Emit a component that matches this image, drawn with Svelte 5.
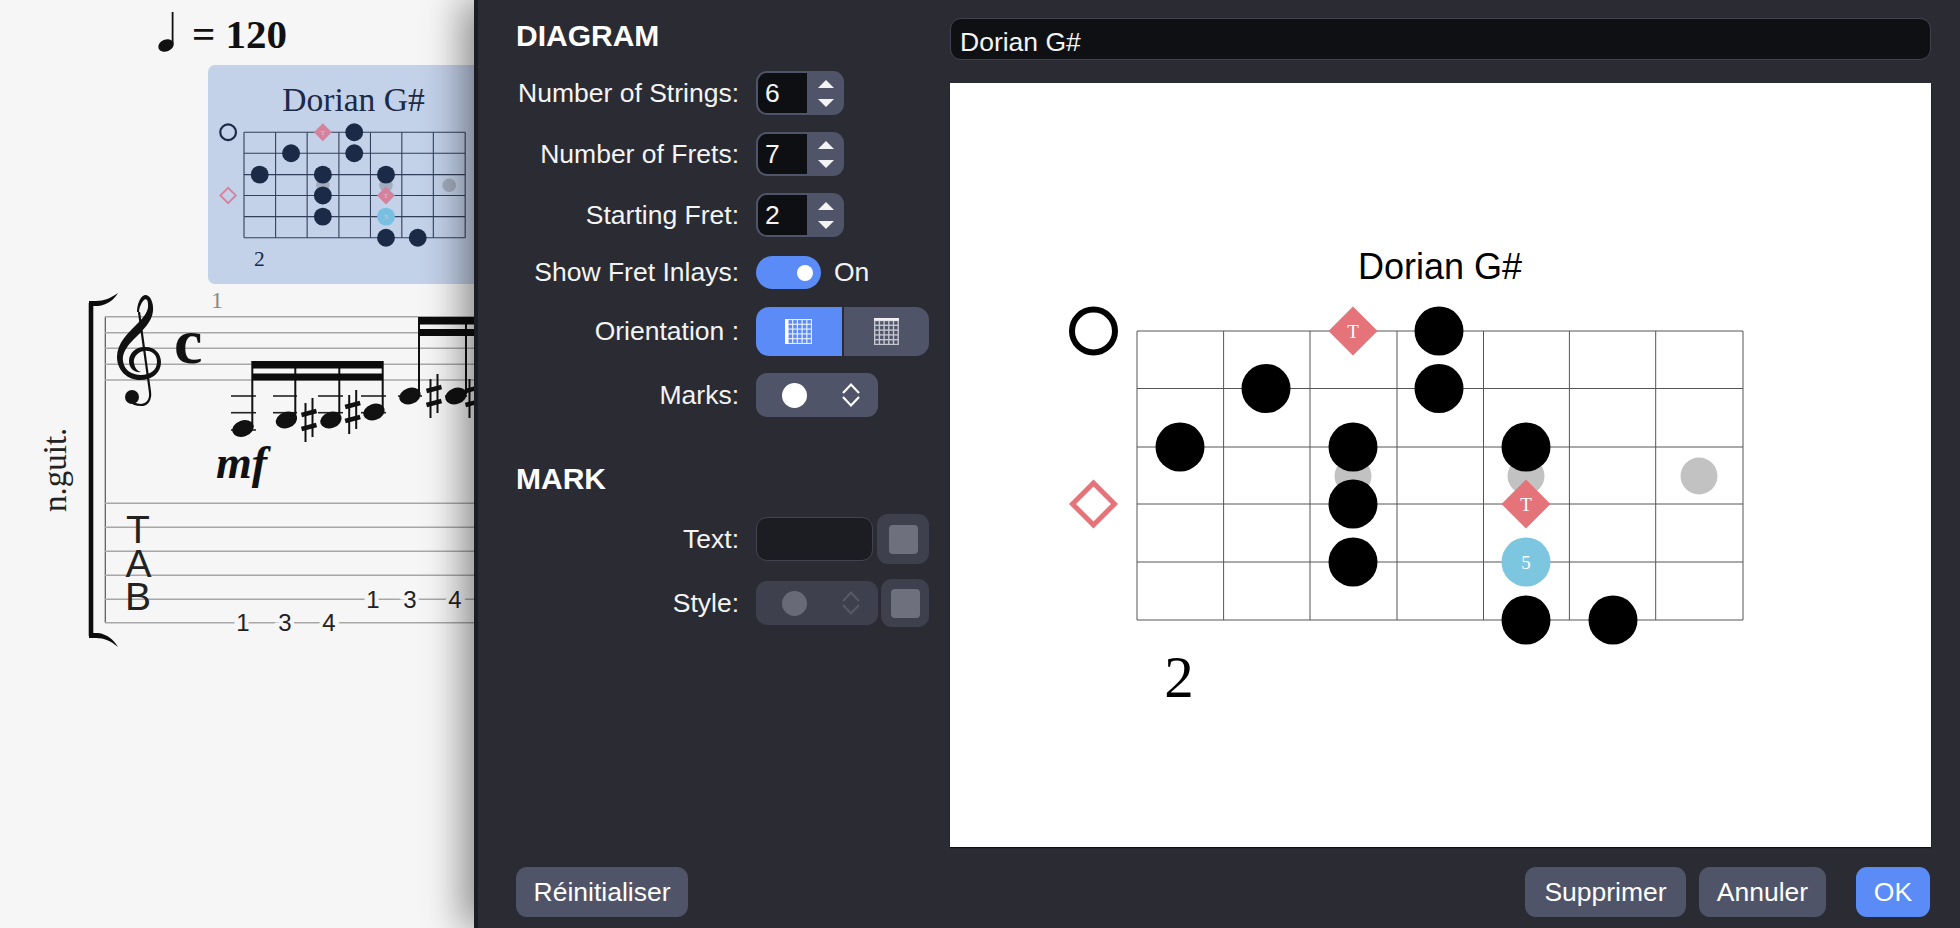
<script>
    const colX = [0, 86.6, 173, 260, 346.5, 432.4, 518.7, 606]
    const rowY = [0, 57.5, 116, 173, 231, 289]

    // fret marks, in grid coordinates of the big preview
    const inlays = [[216, 145], [389, 145], [562, 145]]
    const dots = [
        [302, 0], [302, 57.5], [129, 57.5], [43, 116], [216, 116], [389, 116],
        [216, 173], [216, 231], [389, 289], [476, 289]
    ]
    const big = { ink: '#000', line: '#555', lineW: 1, inlay: '#c2c2c2', red: '#e4737a', blue: '#7cc6e0', txt: '#fff', label: '#000', ring: '#000', titleX: 303, titleY: -52 }
    const small = { ink: '#1b2a47', line: '#333f5a', lineW: 1.1, inlay: '#a3adbd', red: '#d4829d', blue: '#78bfe2', txt: '#e8c8d4', label: '#1b2a47', ring: '#1b2a47', titleX: 300, titleY: -59 }

    const staff = [316.7, 332.7, 348.3, 364.3, 380]
    const tabLines = [503.3, 527.3, 551.3, 575.3, 599.3, 622.7]
    const heads = [[243, 428.5], [286.5, 420], [331, 420], [374, 412], [410, 396], [456, 396]]
    const stems = [[252.3, 361, 427], [295.3, 361, 418], [339.3, 361, 418], [382.7, 361, 410], [419, 317, 394], [466, 317, 394]]
    const ledgers = [
        [231, 256, 396], [231, 256, 412.7], [231, 256, 430],
        [273, 297, 396], [273, 297, 412.7],
        [318, 343, 396], [318, 343, 412.7],
        [361, 386, 396], [361, 386, 412.7],
        [398, 422, 396], [445, 467, 396]
    ]
    const sharps = [[309, 420], [352.7, 412], [434, 396], [473, 396]]
    const tabNums = [['1', 243, 622.7], ['3', 285, 622.7], ['4', 329, 622.7], ['1', 373, 599.3], ['3', 410, 599.3], ['4', 455, 599.3]]
    const spinners = [['Number of Strings:', '6'], ['Number of Frets:', '7'], ['Starting Fret:', '2']]
    const six = [0, 1, 2, 3, 4, 5]
</script>

{#snippet diamond(x, y, fill, t, c)}
    <polygon points="{x - 24.5},{y} {x},{y - 24.5} {x + 24.5},{y} {x},{y + 24.5}" fill={fill} />
    <text x={x} y={y + 6.5} class="mark-text" fill={c}>{t}</text>
{/snippet}

{#snippet fretboard(th)}
    <text x={th.titleX} y={th.titleY} class="fb-title" fill={th.label}>Dorian G#</text>
    {#each rowY as y}
        <line x1="0" x2="606" y1={y} y2={y} stroke={th.line} stroke-width={th.lineW} vector-effect="non-scaling-stroke" />
    {/each}
    {#each colX as x}
        <line x1={x} x2={x} y1="0" y2="289" stroke={th.line} stroke-width={th.lineW} vector-effect="non-scaling-stroke" />
    {/each}
    {#each inlays as [x, y]}
        <circle cx={x} cy={y} r="18.5" fill={th.inlay} />
    {/each}
    {#each dots as [x, y]}
        <circle cx={x} cy={y} r="24.5" fill={th.ink} />
    {/each}
    <circle cx="-43.5" cy="0" r="21.5" fill="none" stroke={th.ring} stroke-width="6" />
    <polygon points="-64.5,173 -43.5,152 -22.5,173 -43.5,194" fill="none" stroke={th.red} stroke-width="5" />
    {@render diamond(216, 0, th.red, 'T', th.txt)}
    {@render diamond(389, 173, th.red, 'T', th.txt)}
    <circle cx="389" cy="231" r="24.5" fill={th.blue} />
    <text x="389" y="237.5" class="mark-text" fill={th.txt}>5</text>
    <text x="42" y="366" class="fb-fret" fill={th.label}>2</text>
{/snippet}

{#snippet sharp(x, y)}
    <g stroke="#111" fill="none">
        <line x1={x - 3.5} x2={x - 3.5} y1={y - 17} y2={y + 22} stroke-width="2" />
        <line x1={x + 3.5} x2={x + 3.5} y1={y - 22} y2={y + 17} stroke-width="2" />
        <line x1={x - 7.5} x2={x + 7.5} y1={y - 5} y2={y - 9} stroke-width="4.5" />
        <line x1={x - 7.5} x2={x + 7.5} y1={y + 9} y2={y + 5} stroke-width="4.5" />
    </g>
{/snippet}

{#snippet updown(color)}
    <svg class="chev" width="20" height="28" viewBox="0 0 20 28">
        <path d="M2 12 L10 3.5 L18 12 M2 16 L10 24.5 L18 16" fill="none" stroke={color} stroke-width="2.2" />
    </svg>
{/snippet}

<div class="page">
    <div class="score">
        <svg width="474" height="928" viewBox="0 0 474 928">
            <!-- tempo -->
            <ellipse cx="166" cy="45.5" rx="8" ry="6" fill="#111" transform="rotate(-22 166 45.5)" />
            <line x1="172.6" x2="172.6" y1="12" y2="44" stroke="#111" stroke-width="1.8" />
            <text x="192" y="47.5" class="tempo">= 120</text>

            <!-- selected diagram -->
            <rect x="208" y="65" width="280" height="219" rx="7" fill="#c3d1e9" />
            <g transform="translate(244 132.3) scale(0.365)">
                {@render fretboard(small)}
            </g>

            <!-- system -->
            <text transform="translate(66 512) rotate(-90)" class="instr">n.guit.</text>
            <text x="217" y="308" class="measure">1</text>
            <path d="M91 303 L91 636" stroke="#0c0c0c" stroke-width="4.6" />
            <path d="M89 301 L89 306 L98 306 C107 305 114 300 118 293 C111 298 104 301 96 301 Z" fill="#0c0c0c" />
            <path d="M89 638 L89 633 L98 633 C107 634 114 640 118 647 C111 641 104 638 96 638 Z" fill="#0c0c0c" />
            <line x1="105.3" x2="105.3" y1="316.7" y2="622.7" stroke="#555" stroke-width="1.2" />
            {#each staff as y}
                <line x1="105" x2="474" y1={y} y2={y} stroke="#a8a8a8" stroke-width="1.5" />
            {/each}
            {#each tabLines as y}
                <line x1="105" x2="474" y1={y} y2={y} stroke="#a8a8a8" stroke-width="1.5" />
            {/each}

            <!-- clef and time -->
            <path d="M145 295 C150 294 154 303 153 311 C152 322 143 330 134 339 C126 347 122 354 123 361 C124 370 132 375 141 375 C150 375 157 370 157 362 C157 354 151 350 144 351 C137 352 133 358 134 363 C135 368 137 371 141 372 C134 373 129 368 129 361 C129 353 136 347 144 347 C154 346 161 353 161 362 C161 373 152 380 140 380 C127 380 117 370 117 357 C117 343 128 333 137 324 C144 317 149 311 148 304 C148 300 146 298 144 300 C141 303 139 308 139 312 L137 312 C137 305 140 296 145 295 Z" fill="#111" />
            <path d="M139 312 L150 392 C151 400 147 405 141 405 C136 405 131 403 130 400" fill="none" stroke="#111" stroke-width="2.2" />
            <circle cx="132" cy="397" r="7" fill="#111" />
            <text x="174" y="363" class="time">c</text>

            <!-- notes -->
            {#each ledgers as [a, b, y]}
                <line x1={a} x2={b} y1={y} y2={y} stroke="#222" stroke-width="1.6" />
            {/each}
            {#each stems as [x, a, b]}
                <line x1={x} x2={x} y1={a} y2={b} stroke="#111" stroke-width="2" />
            {/each}
            <rect x="252" y="361" width="131" height="7.5" fill="#0c0c0c" />
            <rect x="252" y="373.5" width="131" height="7" fill="#0c0c0c" />
            <rect x="419" y="317" width="55" height="7.5" fill="#0c0c0c" />
            <rect x="419" y="329" width="55" height="7" fill="#0c0c0c" />
            {#each heads as [x, y]}
                <ellipse cx={x} cy={y} rx="11" ry="8" fill="#111" transform="rotate(-20 {x} {y})" />
            {/each}
            {#each sharps as [x, y]}
                {@render sharp(x, y)}
            {/each}
            <text x="216" y="478" class="dyn">mf</text>

            <!-- tablature -->
            <text x="126" y="543.3" class="tab">T</text>
            <text x="125.5" y="576.7" class="tab">A</text>
            <text x="125" y="610" class="tab">B</text>
            {#each tabNums as [n, x, y]}
                <text x={x} y={y + 8.5} class="tabnum">{n}</text>
            {/each}
        </svg>
    </div>

    <div class="dialog">
        <div class="body">
            <div class="controls">
                <h2>DIAGRAM</h2>
                <div class="rows">
                    {#each spinners as [name, val]}
                        <div class="row">
                            <span class="label">{name}</span>
                            <div class="spinner">
                                <span class="spin-val">{val}</span>
                                <span class="spin-btns">
                                    <i class="arrow up"></i>
                                    <i class="arrow down"></i>
                                </span>
                            </div>
                        </div>
                    {/each}
                    <div class="row toggle-row">
                        <span class="label">Show Fret Inlays:</span>
                        <span class="toggle"><i></i></span>
                        <span class="on">On</span>
                    </div>
                    <div class="row orient-row">
                        <span class="label">Orientation :</span>
                        <div class="segmented">
                            <span class="seg active">
                                <svg width="27" height="25" viewBox="0 0 27 25">
                                    {#each six as i}
                                        <line x1="1" x2="27" y1={0.5 + i * 4.8} y2={0.5 + i * 4.8} stroke="#e6edff" stroke-width="1.2" />
                                        <line x1={3 + i * 4.7} x2={3 + i * 4.7} y1="0" y2="25" stroke="#e6edff" stroke-width="1.2" />
                                    {/each}
                                    <rect x="0" y="0" width="3" height="25" fill="#fff" />
                                </svg>
                            </span>
                            <span class="seg">
                                <svg width="25" height="27" viewBox="0 0 25 27">
                                    {#each six as i}
                                        <line x1="0" x2="25" y1={2.5 + i * 4.8} y2={2.5 + i * 4.8} stroke="#c4c6d0" stroke-width="1.4" />
                                    {/each}
                                    {#each six as i}
                                        <line x1={0.7 + i * 4.7} x2={0.7 + i * 4.7} y1="1" y2="27" stroke="#c4c6d0" stroke-width="1.4" />
                                    {/each}
                                    <rect x="0" y="0" width="25" height="2.6" fill="#f0f0f4" />
                                </svg>
                            </span>
                        </div>
                    </div>
                    <div class="row">
                        <span class="label">Marks:</span>
                        <div class="select">
                            <i class="dot"></i>
                            {@render updown('#fff')}
                        </div>
                    </div>
                </div>

                <h2 class="mark-head">MARK</h2>
                <div class="rows tight">
                    <div class="row double">
                        <span class="label">Text:</span>
                        <span class="text-field"></span>
                        <span class="square"><i></i></span>
                    </div>
                    <div class="row double">
                        <span class="label">Style:</span>
                        <div class="select off">
                            <i class="dot"></i>
                            {@render updown('#565866')}
                        </div>
                        <span class="square"><i></i></span>
                    </div>
                </div>
            </div>

            <div class="preview">
                <div class="name">Dorian G#</div>
                <div class="canvas">
                    <svg width="981" height="764" viewBox="0 0 981 764">
                        <g transform="translate(187 248)">
                            {@render fretboard(big)}
                        </g>
                    </svg>
                </div>
            </div>
        </div>

        <div class="footer">
            <button class="btn reset">Réinitialiser</button>
            <div class="spacer"></div>
            <button class="btn del">Supprimer</button>
            <button class="btn cancel">Annuler</button>
            <button class="btn ok">OK</button>
        </div>
    </div>
</div>

<style>
    :global(body) {
        margin: 0;
        background: #f6f6f6;
        font-family: "Liberation Sans", Arial, sans-serif;
    }

    .page {
        width: 1960px;
        height: 928px;
        display: flex;
        overflow: hidden;
        background: #f6f6f6;
    }

    .score {
        flex: 0 0 474px;
    }

    .score svg {
        display: block;
    }

    .tempo {
        font: bold 41px "Liberation Serif", serif;
        fill: #111;
    }

    .instr {
        font: 33px "Liberation Serif", serif;
        fill: #222;
    }

    .measure {
        font: 24px "Liberation Serif", serif;
        fill: #8a8a8a;
        text-anchor: middle;
    }

    .time {
        font: bold 64px "Liberation Serif", serif;
        fill: #111;
    }

    .dyn {
        font: italic bold 46px "Liberation Serif", serif;
        fill: #111;
    }

    .tab {
        font: 39px "Liberation Sans", sans-serif;
        fill: #222;
    }

    .tabnum {
        font: 24px "Liberation Sans", sans-serif;
        fill: #222;
        text-anchor: middle;
        stroke: #f6f6f6;
        stroke-width: 8px;
        paint-order: stroke;
    }

    .fb-title {
        font: 36px "Liberation Sans", sans-serif;
        text-anchor: middle;
    }

    .score .fb-title {
        font: 92px "Liberation Serif", serif;
    }

    .fb-fret {
        font: 59px "Liberation Serif", serif;
        text-anchor: middle;
    }

    .mark-text {
        font: 19px "Liberation Serif", serif;
        text-anchor: middle;
    }

    .dialog {
        flex: 1;
        position: relative;
        z-index: 1;
        display: flex;
        flex-direction: column;
        background: #2a2b33;
        border-left: 4px solid #1c1d22;
        box-shadow: -12px 0 36px rgba(0, 0, 0, 0.42);
        color: #f4f4f4;
    }

    .body {
        flex: 1;
        display: flex;
    }

    .controls {
        flex: 0 0 434px;
        padding-left: 38px;
    }

    h2 {
        margin: 19px 0 18px;
        font-size: 30px;
        line-height: 34px;
        font-weight: bold;
        color: #fff;
    }

    .mark-head {
        margin: 45px 0 19px;
    }

    .rows {
        display: flex;
        flex-direction: column;
        gap: 17px;
    }

    .rows.tight {
        gap: 16px;
    }

    .row {
        display: flex;
        align-items: center;
        gap: 18px;
        height: 44px;
    }

    .label {
        flex: 0 0 223px;
        text-align: right;
        font-size: 26.5px;
        line-height: 45px;
        white-space: nowrap;
    }

    .spinner {
        width: 88px;
        height: 44px;
        margin-left: -1px;
        box-sizing: border-box;
        display: flex;
        padding: 2px 0 2px 2px;
        border-radius: 11px;
        background: #4f5468;
    }

    .spin-val {
        width: 49px;
        padding-left: 7px;
        box-sizing: border-box;
        border-radius: 9px 0 0 9px;
        background: #0e0f12;
        font-size: 26.5px;
        line-height: 41px;
    }

    .spin-btns {
        flex: 1;
        display: flex;
        flex-direction: column;
        align-items: center;
        justify-content: center;
        gap: 11px;
    }

    .arrow {
        width: 0;
        height: 0;
        border-left: 8px solid transparent;
        border-right: 8px solid transparent;
    }

    .arrow.up {
        border-bottom: 8px solid #f4f4f4;
    }

    .arrow.down {
        border-top: 8px solid #f4f4f4;
    }

    .toggle-row {
        height: 33px;
        margin-top: 2px;
    }

    .toggle {
        width: 65px;
        height: 33px;
        margin-left: -1px;
        border-radius: 17px;
        background: #5a8bf7;
        display: flex;
        align-items: center;
        justify-content: flex-end;
        padding-right: 8px;
        box-sizing: border-box;
    }

    .toggle i {
        width: 16px;
        height: 16px;
        border-radius: 50%;
        background: #fff;
    }

    .on {
        margin-left: -5px;
        font-size: 26.5px;
    }

    .orient-row {
        height: 49px;
        margin-top: 1px;
    }

    .segmented {
        display: flex;
        gap: 2px;
        width: 173px;
        height: 49px;
        margin-left: -1px;
    }

    .seg {
        flex: 1;
        display: flex;
        align-items: center;
        justify-content: center;
        background: #4f5468;
        border-radius: 0 13px 13px 0;
    }

    .seg.active {
        background: #5a8bf7;
        border-radius: 13px 0 0 13px;
    }

    .select {
        width: 122px;
        height: 44px;
        margin-left: -1px;
        border-radius: 11px;
        background: #4f5468;
        display: flex;
        align-items: center;
        padding-left: 26px;
        gap: 34px;
        box-sizing: border-box;
    }

    .dot {
        width: 25px;
        height: 25px;
        border-radius: 50%;
        background: #fff;
    }

    .chev {
        display: block;
        flex: none;
    }

    .select.off {
        background: #3e404e;
    }

    .select.off .dot {
        background: #686a78;
    }

    .double {
        height: 48px;
    }

    .text-field {
        width: 117px;
        height: 44px;
        margin-left: -1px;
        box-sizing: border-box;
        border: 1.5px solid #42444f;
        border-radius: 11px;
        background: #1c1d22;
    }

    .square {
        flex: none;
        width: 52px;
        height: 50px;
        margin-left: -14px;
        border-radius: 11px;
        background: #3e404e;
        display: flex;
        align-items: center;
        justify-content: center;
    }

    .double:last-child .square {
        width: 48px;
        height: 48px;
        margin-left: -15px;
    }

    .square i {
        width: 29px;
        height: 29px;
        border-radius: 4px;
        background: #6e707d;
    }

    .preview {
        display: flex;
        flex-direction: column;
        gap: 23px;
        margin-top: 18px;
        width: 981px;
    }

    .name {
        height: 42px;
        box-sizing: border-box;
        padding-left: 9px;
        border: 1.5px solid #40424e;
        border-radius: 11px;
        background: #0f1014;
        font-size: 26.5px;
        line-height: 46px;
    }

    .canvas {
        height: 764px;
        background: #fff;
        box-shadow: 0 1px 1px #111;
    }

    .canvas svg {
        display: block;
    }

    .footer {
        flex: 0 0 81px;
        display: flex;
        box-sizing: border-box;
        padding: 20px 30px 11px 38px;
    }

    .spacer {
        flex: 1;
    }

    .btn {
        height: 50px;
        padding: 0;
        border: none;
        border-radius: 11px;
        background: #4f5468;
        color: #fff;
        font: 26.5px "Liberation Sans", sans-serif;
    }

    .reset {
        width: 172px;
    }

    .del {
        width: 161px;
    }

    .cancel {
        width: 127px;
        margin-left: 13px;
    }

    .ok {
        width: 74px;
        margin-left: 30px;
        background: #5a8bf7;
    }
</style>
